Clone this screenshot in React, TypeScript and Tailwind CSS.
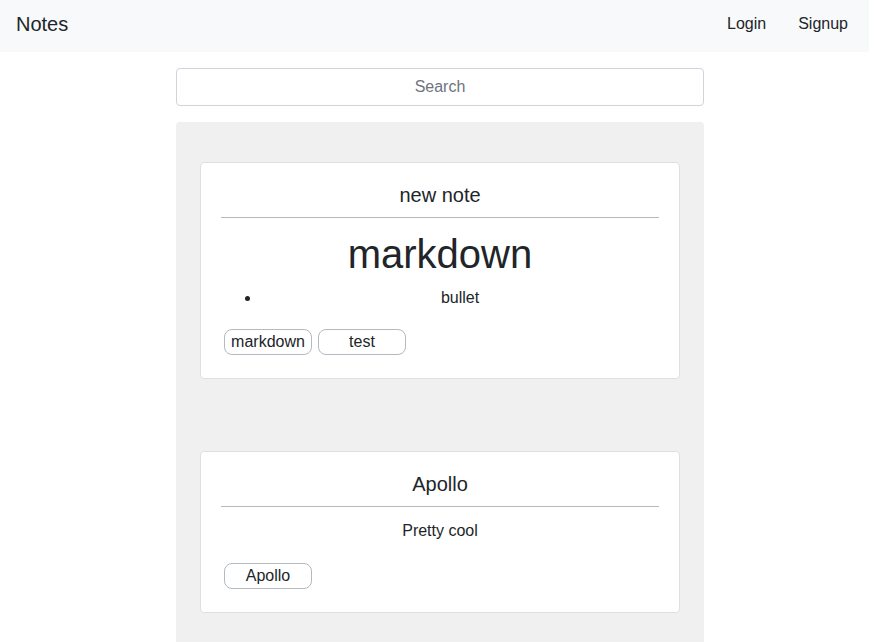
const notes = [
  {
    title: "new note",
    tags: ["markdown", "test"],
    body: (
      <>
        <h1 className="mt-3 text-[40px] leading-[48px] text-[#212529]">markdown</h1>
        <ul className="mt-2 -mb-px list-disc pl-10 text-[16px] leading-6">
          <li>bullet</li>
        </ul>
      </>
    ),
  },
  {
    title: "Apollo",
    tags: ["Apollo"],
    body: <p className="mt-3 text-[16px] leading-6">Pretty cool</p>,
  },
];

const NoteCard = ({ title, tags, body }: { title: string; tags: string[]; body: React.ReactNode }) => {
  return (
    <div className="rounded border border-[#dfdfdf] bg-white px-5 pt-5 pb-[23px] text-center text-[#212529]">
      <h2 className="text-[20px] leading-6">{title}</h2>
      <hr className="mt-[10px] border-t border-[#b3bac1]" />
      {body}
      <div className="mt-5 flex gap-[6px] px-[3px]">
        {tags.map((t) => (
          <span
            key={t}
            className="inline-block h-[26px] w-[88px] rounded-lg border border-[#b3bac1] text-[16px] leading-6"
          >
            {t}
          </span>
        ))}
      </div>
    </div>
  );
};

export default function App() {
  return (
    <div className="min-h-screen bg-white font-['Liberation_Sans',Arial,sans-serif] text-[#212529]">
      <nav className="flex h-[52px] items-start justify-between bg-[#f8f9fa] pl-4 pr-[21px] pt-[9px]">
        <span className="text-[20px] leading-[30px] text-[#212529]">Notes</span>
        <div className="flex gap-8 pt-[3px] text-[16px] leading-6">
          <a className="text-[#212529]">Login</a>
          <a className="text-[#212529]">Signup</a>
        </div>
      </nav>
      <div className="ml-[176px] w-[528px] pt-4">
        <input
          placeholder="Search"
          className="block h-[38px] w-full rounded border border-[#ced4da] bg-white px-3 text-center text-[16px] placeholder:text-[#6c757d] outline-none"
        />
        <div className="mt-4 rounded-t bg-[#f0f0f0] px-6 pt-10 pb-10">
          <div className="flex flex-col gap-[72px]">
            {notes.map((n) => (
              <NoteCard key={n.title} title={n.title} tags={n.tags} body={n.body} />
            ))}
          </div>
        </div>
      </div>
    </div>
  );
}
